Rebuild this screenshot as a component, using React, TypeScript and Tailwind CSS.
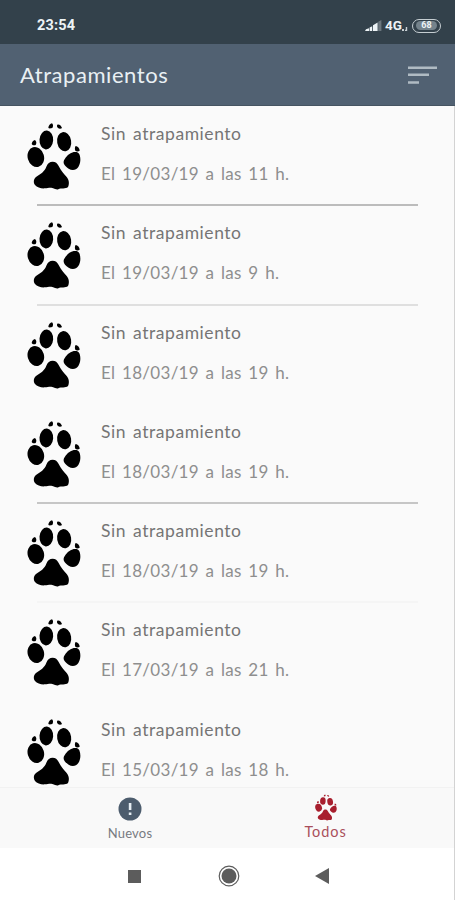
import { clsx } from "clsx";

type Trap = {
  date: string;
  divider: string;
};

const traps: Trap[] = [
  { date: "El 19/03/19 a las 11 h.", divider: "bg-[#bcbcbc]" },
  { date: "El 19/03/19 a las 9 h.", divider: "bg-[#dfdfdf]" },
  { date: "El 18/03/19 a las 19 h.", divider: "bg-transparent" },
  { date: "El 18/03/19 a las 19 h.", divider: "bg-[#c6c6c6]" },
  { date: "El 18/03/19 a las 19 h.", divider: "bg-[#f5f5f5]" },
  { date: "El 17/03/19 a las 21 h.", divider: "bg-transparent" },
  { date: "El 15/03/19 a las 18 h.", divider: "bg-transparent" },
];

function Paw({ className }: { className?: string }) {
  return (
    <svg
      viewBox="36 36 162 207"
      preserveAspectRatio="none"
      fill="currentColor"
      className={className}
    >
      <ellipse cx="94" cy="90" rx="20.5" ry="28.5" transform="rotate(4 94 90)" />
      <ellipse cx="147.5" cy="95" rx="21" ry="29" transform="rotate(-10 147.5 95)" />
      <ellipse cx="62.5" cy="141" rx="24.5" ry="30.5" transform="rotate(-16 62.5 141)" />
      <path d="M193 133C198 145 197 161 190 171C184 181 171 183 161 176C150 169 143 161 147 151C153 139 163 129 176 126C184 125 190 126 193 133Z" />
      <path d="M113 155C121 155 127 159 131 168C138 182 146 191 155 201C163 210 163 223 159 231C152 238 138 233 130 238C124 240 120 236 112 234C103 232 99 235 89 235C79 236 66 232 60 225C54 217 56 205 64 200C76 193 89 184 94 170C98 160 104 155 113 155Z" />
      <path d="M100 54C100 47 106 41 111 40C115 44 115 50 112 54C107 55 103 56 100 54Z" />
      <path d="M127 44C133 42 139 48 141 54C138 57 132 57 129 54C126 51 125 47 127 44Z" />
      <path d="M50 102C51 96 55 91 60 90C65 94 65 101 62 105C57 107 52 106 50 102Z" />
      <path d="M182 108C188 109 194 115 194 122C190 125 184 125 181 122C179 118 179 112 182 108Z" />
    </svg>
  );
}

function StatusBar() {
  return (
    <div className="flex h-11 items-center bg-[#33414b] pt-[7px] pl-[37px] text-[#edf3f6]">
      <span className="pt-[2px] text-[14.5px] leading-none font-bold tracking-[0.2px]">
        23:54
      </span>
      <svg viewBox="0 0 17 12" className="ml-auto h-3 w-[17px]" fill="currentColor">
        <path d="M0 11 1 9.2l3-1V11zM4.6 7.6l2.6-1.4V11H4.6zM8 5.2l4.6-2.8V11H8z" />
        <path d="M13.2 1.8 16.4 0v11h-3.2z" opacity="0.3" />
      </svg>
      <span className="ml-[3px] text-[13.5px] leading-none font-bold">4G</span>
      <svg viewBox="0 0 6 12" className="h-3 w-[6px]" fill="currentColor">
        <path d="M0 9h2v2H0zM3.8 7h1.4v4H3V9.8h.8z" opacity="0.8" />
      </svg>
      <div className="mr-[14px] ml-[4px] flex h-[14px] w-[29px] items-center justify-center rounded-[7px] border-[1.5px] border-[#c6ced2] bg-[#33414b]">
        <span className="flex h-[9px] w-[21px] items-center justify-center rounded-full bg-[#74828b] text-[9px] leading-none font-bold">
          68
        </span>
      </div>
    </div>
  );
}

function AppBar() {
  return (
    <header className="flex h-[62px] items-center justify-between border-b border-[#465461] bg-[#516172] pr-[18px] pl-5 text-[#e9f0f4]">
      <h1 className="font-['Lato','Open_Sans',sans-serif] text-[22px] leading-none tracking-[0.55px]">
        Atrapamientos
      </h1>
      <svg viewBox="0 0 29 19" className="mt-[2px] h-[19px] w-[29px]" fill="#b0bbc3">
        <path d="M0 0.5h29v2.5H0zM0 7.5h21v2.5H0zM0 15.3h11v2.5H0z" />
      </svg>
    </header>
  );
}

function TrapRow({ trap }: { trap: Trap }) {
  return (
    <li className="flex h-[99.3px] shrink-0 flex-col">
      <div className="flex flex-1 pl-[27px]">
        <Paw className="mt-4 h-[69px] w-[54px] text-black" />
        <div className="ml-5 pt-[18px] font-['Lato','Open_Sans',sans-serif] text-[17.5px] leading-5 whitespace-nowrap">
          <p className="tracking-[0.55px] text-[#757575] [word-spacing:2px]">
            Sin atrapamiento
          </p>
          <p className="mt-5 text-[17px] tracking-[0.3px] text-[#8e8e8e] [word-spacing:2px]">
            {trap.date}
          </p>
        </div>
      </div>
      <div className={clsx("-mb-px mr-9 ml-[37px] h-[2px]", trap.divider)} />
    </li>
  );
}

function BottomTabs() {
  return (
    <nav className="flex h-[61px] border-t border-[#f2f2f2] bg-[#f9f9f9] pl-8 font-['Lato','Open_Sans',sans-serif] text-[13px] leading-4">
      <div className="flex w-[196px] flex-col items-center pt-[9px] text-[#777b82]">
        <svg viewBox="0 0 24 24" className="size-6">
          <circle cx="12" cy="12" r="11.5" fill="#4c5c6d" />
          <path d="M10.8 6h2.6v7h-2.6zM10.8 15.5h2.6v2.5h-2.6z" fill="#e5edf3" />
        </svg>
        <span className="mt-1 tracking-[0.2px]">Nuevos</span>
      </div>
      <div className="flex w-[195px] flex-col items-center pt-[6px] text-[#a94f5b]">
        <Paw className="h-[27px] w-[22px] text-[#a81f2e]" />
        <span className="mt-[3px] text-[14.5px] tracking-[0.9px]">Todos</span>
      </div>
    </nav>
  );
}

function SystemNav() {
  return (
    <div className="flex h-[52px] items-center bg-white pt-1 pl-[128px] text-[#5c5c5c]">
      <div className="size-[13px] bg-current" />
      <svg viewBox="0 0 22 22" className="ml-[77px] size-[22px]">
        <circle cx="11" cy="11" r="9.8" fill="none" stroke="currentColor" strokeWidth="1.2" />
        <circle cx="11" cy="11" r="7.5" fill="currentColor" />
      </svg>
      <svg viewBox="0 0 14 16" className="ml-[75px] h-4 w-[14px]" fill="currentColor">
        <path d="M0 8 14 0v16z" />
      </svg>
    </div>
  );
}

export default function App() {
  return (
    <div className="flex h-[900px] w-[455px] flex-col overflow-hidden bg-[#fafafa] font-['Roboto','Liberation_Sans',sans-serif]">
      <StatusBar />
      <AppBar />
      <main className="flex min-h-0 flex-1 flex-col border-r border-[#d3d3d3]">
        <ul className="flex min-h-0 flex-1 flex-col overflow-hidden">
          {traps.map((trap, i) => (
            <TrapRow key={i} trap={trap} />
          ))}
        </ul>
        <BottomTabs />
        <SystemNav />
      </main>
    </div>
  );
}
